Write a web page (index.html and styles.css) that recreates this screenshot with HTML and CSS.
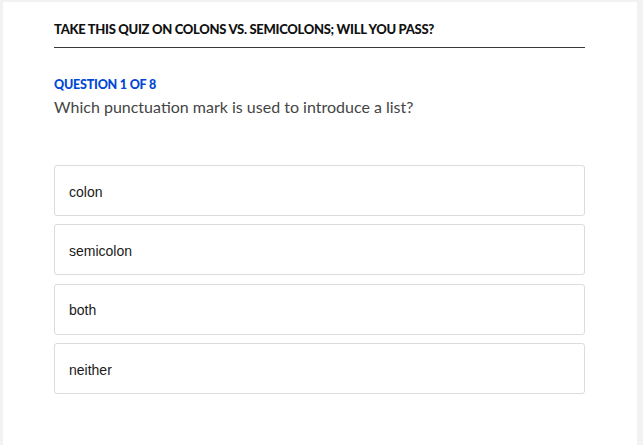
FILE: index.html
```html
<!DOCTYPE html>
<html lang="en">

<head>
    <meta charset="UTF-8">
    <meta name="viewport" content="width=device-width, initial-scale=1.0">
    <title>Colons vs. Semicolons Quiz</title>
    <link rel="stylesheet" href="styles.css">
</head>

<body>
    <div class="panel">
        <div class="quiz-title">
            <h1>Take this quiz on colons vs. semicolons; will you pass?</h1>
        </div>

        <div class="question">
            <div class="counter">Question 1 of 8</div>
            <p class="prompt">Which punctuation mark is used to introduce a list?</p>
        </div>

        <div class="answers">
            <button class="answer" type="button">colon</button>
            <button class="answer" type="button">semicolon</button>
            <button class="answer" type="button">both</button>
            <button class="answer" type="button">neither</button>
        </div>
    </div>
</body>

</html>
```

FILE: styles.css
```css
html,
body {
    margin: 0;
    height: 100%;
}

body {
    background: #f2f2f2;
    overflow: hidden;
}

.panel {
    margin: 2px 6px 0 3px;
    min-height: 100%;
    background: #fff;
    padding: 20px 52px 0 51px;
    box-sizing: border-box;
}

.quiz-title {
    border-bottom: 1px solid #3a3a3a;
    padding-bottom: 10px;
}

h1 {
    margin: 0;
    font-family: Lato, sans-serif;
    font-size: 13px;
    font-weight: 900;
    line-height: 15px;
    text-transform: uppercase;
    color: #111;
    letter-spacing: -0.3px;
}

.question {
    margin-top: 29px;
}

.counter {
    font-family: Lato, sans-serif;
    font-size: 12.5px;
    font-weight: 900;
    line-height: 15px;
    text-transform: uppercase;
    color: #0047d6;
    letter-spacing: -0.2px;
}

.prompt {
    margin: 5px 0 0;
    font-family: Lato, sans-serif;
    font-size: 16px;
    line-height: 20px;
    color: #454545;
}

.answers {
    margin-top: 48px;
    display: flex;
    flex-direction: column;
    gap: 8.4px;
}

.answer {
    display: block;
    width: 100%;
    height: 51px;
    padding: 2px 14px 0;
    background: #fff;
    border: 1px solid #dcdcdc;
    border-radius: 3px;
    text-align: left;
    font-family: "Liberation Sans", Arial, sans-serif;
    font-size: 14px;
    color: #1a1a1a;
    cursor: pointer;
}
```
